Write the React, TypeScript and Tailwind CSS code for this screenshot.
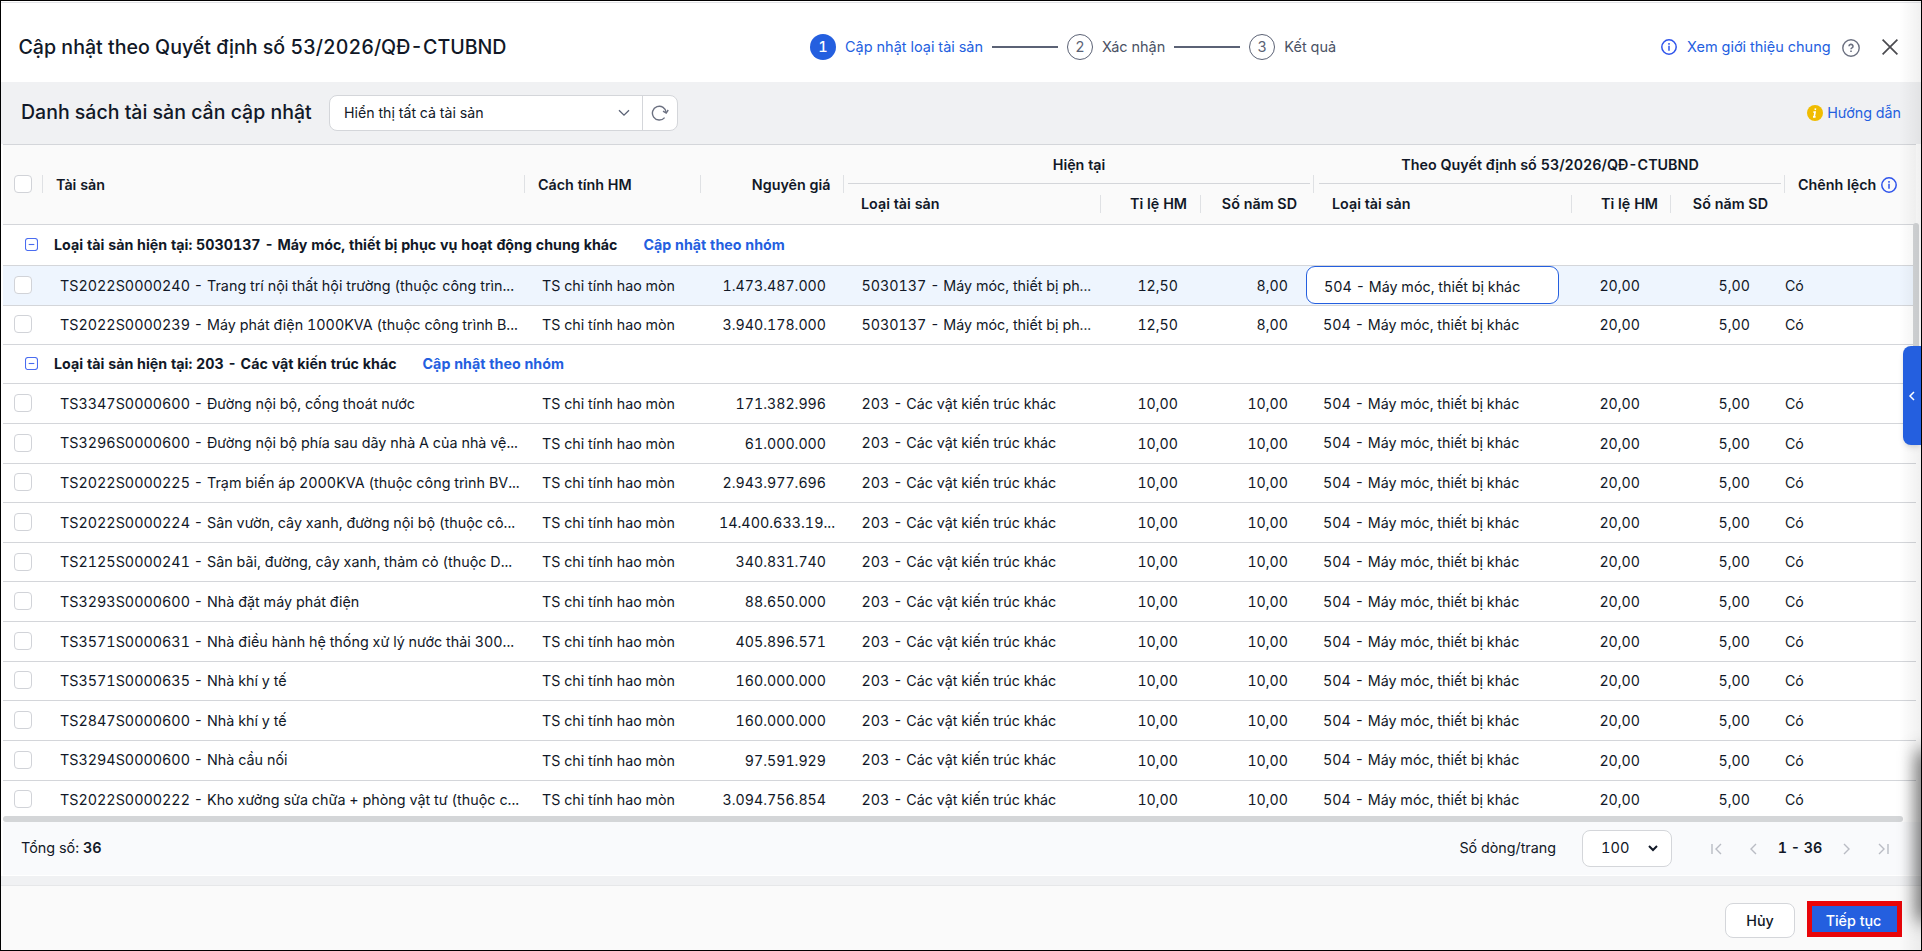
import React from "react";

type Row = { id: string; name: string; price: string; cur: string; rate: string; years: string };

const K203 = "203 - Các vật kiến trúc khác";
const K503 = "5030137 - Máy móc, thiết bị ph...";
const NEXT = "504 - Máy móc, thiết bị khác";

const groupA: Row[] = [
  { id: "TS2022S0000240", name: "Trang trí nội thất hội trường (thuộc công trìn...", price: "1.473.487.000", cur: K503, rate: "12,50", years: "8,00" },
  { id: "TS2022S0000239", name: "Máy phát điện 1000KVA (thuộc công trình B...", price: "3.940.178.000", cur: K503, rate: "12,50", years: "8,00" },
];

const groupB: Row[] = [
  ["TS3347S0000600", "Đường nội bộ, cống thoát nước", "171.382.996"],
  ["TS3296S0000600", "Đường nội bộ phía sau dãy nhà A của nhà vệ...", "61.000.000"],
  ["TS2022S0000225", "Trạm biến áp 2000KVA (thuộc công trình BV...", "2.943.977.696"],
  ["TS2022S0000224", "Sân vườn, cây xanh, đường nội bộ (thuộc cô...", "14.400.633.19..."],
  ["TS2125S0000241", "Sân bãi, đường, cây xanh, thảm cỏ (thuộc D...", "340.831.740"],
  ["TS3293S0000600", "Nhà đặt máy phát điện", "88.650.000"],
  ["TS3571S0000631", "Nhà điều hành hệ thống xử lý nước thải 300...", "405.896.571"],
  ["TS3571S0000635", "Nhà khí y tế", "160.000.000"],
  ["TS2847S0000600", "Nhà khí y tế", "160.000.000"],
  ["TS3294S0000600", "Nhà cầu nối", "97.591.929"],
  ["TS2022S0000222", "Kho xưởng sửa chữa + phòng vật tư (thuộc c...", "3.094.756.854"],
].map(([id, name, price]) => ({ id, name, price, cur: K203, rate: "10,00", years: "10,00" }));

const COLS = "grid grid-cols-[39px_482px_176px_143px_257px_100px_113px_258px_99px_114px_132px]";

function Checkbox() {
  return <span className="-mt-px block h-[18px] w-[18px] shrink-0 rounded-[4px] border border-[#d1d3d8] bg-white" />;
}

function InfoIcon({ className }: { className?: string }) {
  return (
    <svg viewBox="0 0 16 16" className={className} fill="none" stroke="#2f54eb" strokeWidth="1.5">
      <circle cx="8" cy="8" r="7.2" />
      <path d="M8 6.8v4.9" />
      <path d="M8 4.1v1.6" />
    </svg>
  );
}

function Step({ n, label, active }: { n: number; label: string; active?: boolean }) {
  return (
    <div className="flex items-center gap-[9px]">
      <span
        className={
          active
            ? "flex h-[26px] w-[26px] items-center justify-center rounded-full bg-[#245fdf] font-medium text-white"
            : "flex h-[26px] w-[26px] items-center justify-center rounded-full border border-[#5b6275] text-[#5b6275]"
        }
      >
        {n}
      </span>
      <span className={active ? "text-[#245fdf]" : "text-[#4b5265]"}>{label}</span>
    </div>
  );
}

function GroupRow({ label, tall }: { label: string; tall?: boolean }) {
  return (
    <div className={`flex shrink-0 items-center border-b border-[#d4d6da] pl-[22px] text-[14.25px] font-bold ${tall ? "h-[41px]" : "h-[39px] pb-[1px]"}`}>
      <svg viewBox="0 0 13 13" className="-mt-px h-[13px] w-[13px]" fill="none" stroke="#4a6cf0" strokeWidth="1.1">
        <rect x="0.5" y="0.5" width="12" height="12" rx="2.5" />
        <path d="M3.7 6.5h5.6" />
      </svg>
      <span className="ml-4">{label}</span>
      <span className="ml-[26px] text-[#245fdf]">Cập nhật theo nhóm</span>
    </div>
  );
}

function DataRow({ row, selected }: { row: Row; selected?: boolean }) {
  return (
    <div className={`${COLS} h-[39.64px] shrink-0 items-center border-b border-[#d4d6da] text-[14.2px] last:border-b-0 last:pb-px ${selected ? "bg-[#eef5fe]" : ""}`}>
      <div className="pl-[11px]"><Checkbox /></div>
      <div className="whitespace-nowrap pl-[18px] text-[14.35px]">{row.id} - {row.name}</div>
      <div className="pl-[18px] text-[14.25px]">TS chỉ tính hao mòn</div>
      <div className={row.price.endsWith("...") ? "whitespace-nowrap pr-[8px] text-right text-[14.35px]" : "pr-[17px] text-right"}>{row.price}</div>
      <div className="whitespace-nowrap pl-[18.5px] text-[14.3px]">{row.cur}</div>
      <div className="pr-[22px] text-right">{row.rate}</div>
      <div className="pr-[25px] text-right">{row.years}</div>
      {selected ? (
        <div className="-ml-[7px] flex h-[38px] w-[253px] items-center rounded-[9px] border border-[#245fdf] bg-white pl-[17px] pt-[2px] text-[14.3px]">{NEXT}</div>
      ) : (
        <div className="pl-[10px] text-[14.3px]">{NEXT}</div>
      )}
      <div className="pr-[30px] text-right">20,00</div>
      <div className="pr-[34px] text-right">5,00</div>
      <div className="pl-[1px]">Có</div>
    </div>
  );
}

function Sep() {
  return <span className="-mt-px h-[18px] w-px shrink-0 bg-[#dfe1e4]" />;
}

function GroupHead({ title, first }: { title: string; first?: boolean }) {
  return (
    <div className={first ? "flex flex-col pl-[4px] pr-[3px]" : "flex flex-col pl-[5px] pr-[3px]"}>
      <div className="flex h-[39px] items-center justify-center border-b border-[#d4d6da] pt-[2px]">{title}</div>
      <div className="flex h-[40px] items-center">
        <span className="w-[252px] shrink-0 pl-[13px]">Loại tài sản</span>
        <Sep />
        <span className={first ? "w-[99px] pr-[13px] text-right" : "w-[98px] pr-[12px] text-right"}>Tỉ lệ HM</span>
        <Sep />
        <span className={first ? "w-[96px] text-right" : "w-[97px] text-right"}>Số năm SD</span>
      </div>
    </div>
  );
}

export default function App() {
  return (
    <div className="relative flex h-[951px] w-[1922px] flex-col overflow-hidden border border-black bg-white font-['Inter',sans-serif] text-[14.3px] tabular-nums text-[#111827]">
      <header className="mt-px grid h-[80px] shrink-0 grid-cols-[809px_1fr_260px] items-center border-t border-[#e3e4e8] pt-[10px]">
        <h1 className="whitespace-nowrap pl-[17.5px] text-[19.6px] font-medium">Cập nhật theo Quyết định số 53/2026/QĐ-CTUBND</h1>
        <div className="-mt-px flex items-center gap-[9px] text-[14.5px]">
          <Step n={1} label="Cập nhật loại tài sản" active />
          <span className="h-[2px] w-[66px] bg-[#5b6275]" />
          <Step n={2} label="Xác nhận" />
          <span className="h-[2px] w-[66px] bg-[#5b6275]" />
          <Step n={3} label="Kết quả" />
        </div>
        <div className="-mt-px flex items-center text-[14.5px]">
          <InfoIcon className="h-4 w-4" />
          <span className="ml-[10px] whitespace-nowrap text-[#245fdf]">Xem giới thiệu chung</span>
          <svg viewBox="0 0 18 18" className="ml-[11px] mt-[2px] h-[18px] w-[18px]" fill="none" stroke="#6b7080" strokeWidth="1.4">
            <circle cx="9" cy="9" r="8.2" />
            <path d="M7 7.3a2 1.9 0 1 1 3 1.6c-.7.4-1 .7-1 1.3M9 11.5v1.5" strokeWidth="1.6" />
          </svg>
          <svg viewBox="0 0 16 16" className="ml-[22px] h-4 w-4" fill="none" stroke="#4a4a4f" strokeWidth="1.7">
            <path d="M.6.6l14.8 14.8M15.4.6L.6 15.4" />
          </svg>
        </div>
      </header>

      <section className="flex h-[62px] shrink-0 items-center bg-[#f0f1f3] pl-[20px] pr-[20px]">
        <h2 className="w-[308px] whitespace-nowrap text-[19.5px] font-medium">Danh sách tài sản cần cập nhật</h2>
        <div className="flex h-[36px] w-[349px] rounded-[8px] border border-[#d4d6da] bg-white">
          <div className="flex flex-1 items-center justify-between pl-[14px] pr-[12px] text-[14.2px]">
            <span>Hiển thị tất cả tài sản</span>
            <svg viewBox="0 0 12 8" className="h-2 w-3" fill="none" stroke="#5b6275" strokeWidth="1.3"><path d="M1 1.2l5 5 5-5" /></svg>
          </div>
          <div className="flex w-[35px] items-center justify-center border-l border-[#d4d6da]">
            <svg viewBox="0 0 18 18" className="h-[18px] w-[18px]" fill="none" stroke="#6b7080" strokeWidth="1.4">
              <path d="M13.6 13.6A6.9 6.9 0 1 1 15.2 8.6" /><path d="M12 7.2l3.2 1.9 2-3.1" />
            </svg>
          </div>
        </div>
        <div className="ml-auto flex items-center gap-[4px] text-[14.3px] text-[#245fdf]">
          <svg viewBox="0 0 16 16" className="h-4 w-4">
            <circle cx="8" cy="8" r="8" fill="#f0bc00" />
            <path d="M8.5 3.3l-.3 1.7M6.4 7.1h1.7L7.2 11.8M6 11.9h2.6" fill="none" stroke="#fff" strokeWidth="1.6" />
          </svg>
          <span>Hướng dẫn</span>
        </div>
      </section>

      <main className="ml-[2px] flex h-[678px] w-[1913px] shrink-0 flex-col overflow-hidden">
        <div className="flex h-[81px] shrink-0 items-center border-y border-[#d4d6da] bg-[#fafafa] font-semibold">
          <div className="w-[39px] pl-[11px]"><Checkbox /></div>
          <Sep />
          <span className="w-[481px] pl-[13px]">Tài sản</span>
          <Sep />
          <span className="w-[175px] pl-[13px]">Cách tính HM</span>
          <Sep />
          <span className="w-[142px] pr-[12.5px] text-right">Nguyên giá</span>
          <Sep />
          <div className="w-[469px]"><GroupHead title="Hiện tại" first /></div>
          <Sep />
          <div className="w-[470px]"><GroupHead title="Theo Quyết định số 53/2026/QĐ-CTUBND" /></div>
          <Sep />
          <span className="ml-[13px] mr-[5px] whitespace-nowrap">Chênh lệch</span>
          <InfoIcon className="h-4 w-4" />
        </div>
        <GroupRow label="Loại tài sản hiện tại: 5030137 - Máy móc, thiết bị phục vụ hoạt động chung khác" tall />
        {groupA.map((r, i) => <DataRow key={r.id} row={r} selected={i === 0} />)}
        <GroupRow label="Loại tài sản hiện tại: 203 - Các vật kiến trúc khác" />
        {groupB.map((r) => <DataRow key={r.id} row={r} />)}
      </main>

      <footer className="flex h-[128px] shrink-0 flex-col">
        <div className="ml-[2px] flex h-[54px] items-center border-b border-white bg-[#f9fafc] pl-[18px] pr-[32px]">
          <span className="-mt-px text-[14.4px]">Tổng số: <b className="font-semibold">36</b></span>
          <span className="-mt-px ml-auto">Số dòng/trang</span>
          <div className="ml-[26px] flex h-[37px] w-[90px] items-center justify-between rounded-[8px] border border-[#d4d6da] bg-white pl-[18px] pr-[13px] text-[14.6px]">
            100
            <svg viewBox="0 0 10 7" className="h-[7px] w-[10px]" fill="none" stroke="#111827" strokeWidth="2"><path d="M1 1l4 4 4-4" /></svg>
          </div>
          <svg viewBox="0 0 11 12" className="ml-[39px] h-3 w-[11px]" fill="none" stroke="#b9bcc4" strokeWidth="1.4"><path d="M1 1v10M10 1L5 6l5 5" /></svg>
          <svg viewBox="0 0 7 12" className="ml-[28px] h-3 w-[7px]" fill="none" stroke="#b9bcc4" strokeWidth="1.4"><path d="M6 1L1 6l5 5" /></svg>
          <span className="-mt-px w-[86px] text-center font-semibold">1 - 36</span>
          <svg viewBox="0 0 7 12" className="h-3 w-[7px]" fill="none" stroke="#b9bcc4" strokeWidth="1.4"><path d="M1 1l5 5-5 5" /></svg>
          <svg viewBox="0 0 11 12" className="ml-[28px] h-3 w-[11px]" fill="none" stroke="#b9bcc4" strokeWidth="1.4"><path d="M10 1v10M1 1l5 5-5 5" /></svg>
        </div>
        <div className="h-[9px] shrink-0 bg-[#f0f1f3]" />
        <div className="flex h-[65px] items-center justify-end gap-[12px] border-t border-[#e6e7e9] bg-[#fafafa] pr-[19px] pt-[4px]">
          <button className="h-[35px] w-[70px] rounded-[8px] border border-[#d4d6da] bg-white pt-px font-medium">Hủy</button>
          <button className="-mt-[2px] h-[36px] w-[95px] border-[5px] border-[#e80509] bg-[#245fdf] pr-[2px] pt-[3px] font-medium text-white">Tiếp tục</button>
        </div>
      </footer>

      <div className="absolute left-[2px] top-[815px] h-[6px] w-[1900px] rounded-full bg-[#d4d6d8]" />
      <div className="absolute left-[1912px] top-[222px] h-[200px] w-[6px] rounded-full bg-[#d4d6d8]" />
      <div className="absolute right-0 top-0 h-full w-[22px] bg-gradient-to-r from-transparent to-black/6" />
      <div className="absolute -right-[6px] top-[755px] h-[160px] w-[4px] shadow-[0_0_18px_5px_rgba(0,0,0,0.7)]" />
      <div className="absolute left-[1902px] top-[345px] flex h-[99px] w-[18px] items-center justify-center rounded-l-[8px] bg-[#245fdf] pr-[2px] shadow-md">
        <svg viewBox="0 0 7 10" className="h-[10px] w-[7px]" fill="none" stroke="#fff" strokeWidth="1.5"><path d="M6 1L2 5l4 4" /></svg>
      </div>
    </div>
  );
}
